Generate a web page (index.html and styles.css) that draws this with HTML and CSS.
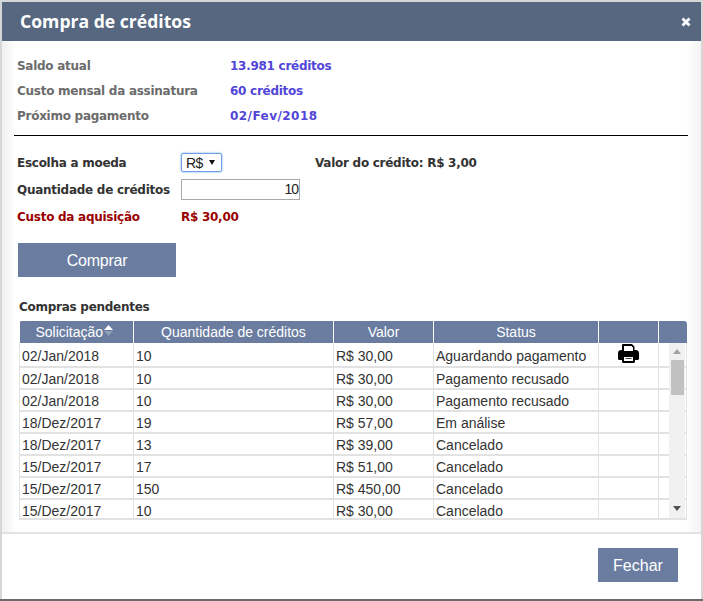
FILE: index.html
```html
<!DOCTYPE html>
<html lang="pt">
<head>
<meta charset="utf-8">
<title>Compra de créditos</title>
<link rel="stylesheet" href="styles.css">
</head>
<body>
<div class="modal">
  <header class="head">
    <h1 class="title">Compra de créditos</h1>
    <svg class="close" viewBox="0 0 10 10" width="10" height="10"><path d="M1.500 1.500 8.500 8.500M8.500 1.500 1.500 8.500" stroke="#fff" stroke-width="2.800"/></svg>
  </header>
  <main class="content">
    <dl class="summary">
      <dt>Saldo atual</dt><dd>13.981 créditos</dd>
      <dt>Custo mensal da assinatura</dt><dd>60 créditos</dd>
      <dt>Próximo pagamento</dt><dd class="date">02/Fev/2018</dd>
    </dl>
    <hr class="rule">
    <div class="form">
      <div class="row">
        <span class="label">Escolha a moeda</span>
        <span class="select">R$ <i class="caret"></i></span>
        <span class="label rate">Valor do crédito: R$ 3,00</span>
      </div>
      <div class="row">
        <span class="label">Quantidade de créditos</span>
        <span class="input">10</span>
      </div>
      <div class="row cost">
        <span class="label">Custo da aquisição</span>
        <span class="label">R$ 30,00</span>
      </div>
    </div>
    <button class="btn buy">Comprar</button>
    <h2 class="sub">Compras pendentes</h2>
    <div class="grid">
      <table>
        <colgroup><col class="c1"><col class="c2"><col class="c3"><col class="c4"><col class="c5"><col></colgroup>
        <thead>
          <tr><th class="sorted">Solicitação<svg class="sort" viewBox="0 0 9 11" width="9" height="11"><path d="M4.500 0 9 5H0Z" fill="#fff"/><path d="M4.500 11 9 6H0Z" fill="#8f9fb8"/></svg></th><th>Quantidade de créditos</th><th>Valor</th><th>Status</th><th></th><th></th></tr>
        </thead>
        <tbody>
          <tr class="first"><td>02/Jan/2018</td><td>10</td><td>R$ 30,00</td><td>Aguardando pagamento</td><td class="ic"><svg class="printer" viewBox="0 0 21 20" width="21" height="20"><path fill="#000" d="M5 1h9l2.500 2.500V7h1.200C19.500 7 21 8.300 21 10v5.500c0 .8-.6 1.500-1.500 1.500H17v1.500c0 .8-.6 1.500-1.500 1.500h-10C4.600 20 4 19.300 4 18.500V17H1.500C.6 17 0 16.300 0 15.500V10c0-1.700 1.500-3 3.300-3H4V2c0-.6.500-1 1-1Z"/><path fill="#fff" d="M6 3h7.500L15 4.500V8H6ZM6 14h9v4H6Z"/><path fill="#000" d="M7.500 15.300h6v.8h-6Z"/></svg></td><td></td></tr>
          <tr><td>02/Jan/2018</td><td>10</td><td>R$ 30,00</td><td>Pagamento recusado</td><td></td><td></td></tr>
          <tr><td>02/Jan/2018</td><td>10</td><td>R$ 30,00</td><td>Pagamento recusado</td><td></td><td></td></tr>
          <tr><td>18/Dez/2017</td><td>19</td><td>R$ 57,00</td><td>Em análise</td><td></td><td></td></tr>
          <tr><td>18/Dez/2017</td><td>13</td><td>R$ 39,00</td><td>Cancelado</td><td></td><td></td></tr>
          <tr><td>15/Dez/2017</td><td>17</td><td>R$ 51,00</td><td>Cancelado</td><td></td><td></td></tr>
          <tr><td>15/Dez/2017</td><td>150</td><td>R$ 450,00</td><td>Cancelado</td><td></td><td></td></tr>
          <tr><td>15/Dez/2017</td><td>10</td><td>R$ 30,00</td><td>Cancelado</td><td></td><td></td></tr>
        </tbody>
      </table>
      <div class="scrollbar">
        <i class="arrow up"></i>
        <div class="thumb"></div>
        <i class="arrow down"></i>
      </div>
    </div>
  </main>
  <footer class="foot">
    <button class="btn close-btn">Fechar</button>
  </footer>
</div>
</body>
</html>
```
FILE: styles.css
```css
* { box-sizing: border-box; }
html, body { margin: 0; height: 601px; overflow: hidden; }
body { background: linear-gradient(180deg, #d6d6d6 599px, #6a6a6a 599px); padding: 2px 2px 2px 2px; font-family: "DejaVu Sans", sans-serif; }
.modal { height: 597px; background: #fff; display: flex; flex-direction: column; }
.head { height: 39px; flex: none; background: #56677f; display: flex; align-items: center; justify-content: space-between; padding: 0 10px 0 18px; }
.title { margin: -2px 0 0; color: #fff; font-size: 17.6px; font-weight: 700; font-family: "Open Sans", sans-serif; }
.close { display: block; }
.content { height: 493px; flex: none; padding: 12px 12px 0 12px; border-bottom: 2px solid #e2e2e2; background: linear-gradient(90deg, #efefef 0, #fff 14px, #fff 684px, #f3f3f3 699px); }
.summary { margin: 0 0 0 3px; display: grid; grid-template-columns: 213px 1fr; grid-auto-rows: 25px; align-items: center; font-size: 12px; letter-spacing: -.27px; font-weight: 700; }
.summary dt { color: #6b6b6b; }
.summary dd { margin: 0; color: #5146d8; }
.summary .date { letter-spacing: .45px; }
.rule { margin: 7px 0 0; border: 0; border-top: 1px solid #000; width: 674px; }
.form { margin: 13px 0 0 3px; display: flex; flex-direction: column; font-size: 12px; letter-spacing: -.27px; font-weight: 700; color: #333; }
.row { display: flex; align-items: center; height: 27px; }
.label { white-space: nowrap; }
.row > .label:first-child { width: 164px; }
.select { width: 41px; height: 19px; border: 1px solid #6f9fe6; border-radius: 2px; box-shadow: 0 0 2px #5b93e6; font: 400 14px "Liberation Sans", sans-serif; letter-spacing: -.5px; color: #222; display: flex; align-items: center; padding-left: 4px; gap: 6px; }
.caret { width: 0; height: 0; border: 3.5px solid transparent; border-top: 5px solid #111; border-bottom: 0; }
.rate { margin-left: 93px; }
.input { width: 119px; height: 21px; border: 1px solid #a9a9a9; font: 400 14px "Liberation Sans", sans-serif; letter-spacing: -1px; color: #222; text-align: right; padding: 1px 1px 0 0; }
.cost { color: #990000; }
.btn { display: block; border: 0; background: #6a7da1; color: #fff; font: 400 16px "Liberation Sans", sans-serif; padding: 2px 0 0; }
.buy { width: 158px; height: 34px; margin: 13px 0 0 4px; letter-spacing: -.25px; }
.sub { margin: 22px 0 0 5px; font-size: 12px; letter-spacing: -.27px; font-weight: 700; color: #333; line-height: 16px; height: 16px; }
.grid { position: relative; margin: 6px 0 0 5px; width: 668px; height: 199px; overflow: hidden; border-radius: 3px 3px 0 0; border-bottom: 2px solid #e2e2e2; }
table { width: 668px; border-collapse: collapse; table-layout: fixed; font: 400 14px "Liberation Sans", sans-serif; }
.c1 { width: 114px; } .c2 { width: 200px; } .c3 { width: 100px; } .c4 { width: 165px; } .c5 { width: 60px; }
th { height: 22px; padding: 0; background: #6a7da1; color: #fff; font-weight: 400; border-right: 1px solid #fff; text-align: center; line-height: 22px; }
th.sorted { padding-right: 4px; }
th:last-child { border-right: 0; }
td { height: 22px; padding: 2px 0 0 2px; border-right: 1px solid #e2e2e2; border-bottom: 2px solid #e2e2e2; color: #333; line-height: 18px; white-space: nowrap; }
td:first-child { border-left: 1px solid #e2e2e2; }
.first td { height: 24px; }
.first .ic { padding: 0; text-align: center; }
.printer { display: block; margin: 0 auto 3px; }
.sort { margin-left: 1px; vertical-align: 1px; }
.scrollbar { position: absolute; right: 2px; top: 22px; bottom: 0; width: 16px; background: #f1f1f1; display: flex; flex-direction: column; align-items: center; }
.thumb { width: 13px; height: 35px; background: #c1c1c1; margin-top: 6px; }
.arrow { width: 0; height: 0; border: 4px solid transparent; }
.up { border-top: 0; border-bottom: 5px solid #a3a3a3; margin-top: 6px; }
.down { border-bottom: 0; border-top: 5px solid #505050; margin-top: auto; margin-bottom: 7px; }
.foot { flex: 1; display: flex; justify-content: flex-end; align-items: flex-start; padding: 14px 23px 0 0; }
.close-btn { width: 80px; height: 34px; }
```
